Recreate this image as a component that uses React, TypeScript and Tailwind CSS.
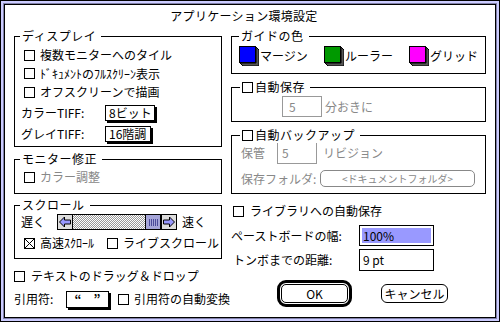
import type { ReactNode } from 'react';

function Check({ checked = false }: { checked?: boolean }) {
  return (
    <span className="w-[11px] h-[11px] shrink-0 border border-black bg-white flex">
      {checked && (
        <svg width="9" height="9" viewBox="0 0 9 9">
          <path d="M0 0L9 9M9 0L0 9" stroke="black" strokeWidth="1" />
        </svg>
      )}
    </span>
  );
}

function Group({
  label,
  labelLeft = 5,
  className = '',
  children,
}: {
  label: ReactNode;
  labelLeft?: number;
  className?: string;
  children?: ReactNode;
}) {
  return (
    <div className={`relative border border-black ${className}`}>
      <div
        className="absolute top-[-9px] h-[16px] bg-white px-[2px] pr-[5px] flex items-center gap-[2px] whitespace-nowrap tracking-[0.5px]"
        style={{ left: labelLeft }}
      >
        {label}
      </div>
      {children}
    </div>
  );
}

function Swatch({ color }: { color: string }) {
  return (
    <svg width="20" height="20" viewBox="0 0 20 20" className="shrink-0">
      <polygon points="17,1 20,4 20,20 4,20 1,17 17,17" fill="#555" stroke="black" strokeWidth="1" />
      <rect x="0.5" y="0.5" width="16" height="16" fill={color} stroke="black" strokeWidth="1" />
    </svg>
  );
}

function Arrow({ dir }: { dir: 'left' | 'right' }) {
  const pts =
    dir === 'left'
      ? '1.5,7 6.5,2 6.5,5 12.5,5 12.5,9 6.5,9 6.5,12'
      : '12.5,7 7.5,2 7.5,5 1.5,5 1.5,9 7.5,9 7.5,12';
  return (
    <div className="w-[16px] h-[16px] border border-black bg-[#dddddd] flex">
      <svg width="14" height="14" viewBox="0 0 14 14">
        <polygon points={pts} fill="#9999ff" stroke="black" strokeWidth="1" />
      </svg>
    </div>
  );
}

function ScrollBar() {
  return (
    <div className="flex w-[120px] h-[16px]">
      <Arrow dir="left" />
      <div className="flex-1 border-y border-black bg-[repeating-conic-gradient(#999_0_25%,#fff_0_50%)] bg-[length:2px_2px]" />
      <div className="w-[16px] h-[16px] border border-black bg-[#a5a5d8] flex">
        <svg width="14" height="14" viewBox="0 0 14 14">
          {[3, 5, 7, 9, 11].map((x) => (
            <line key={x} x1={x + 0.5} y1="4" x2={x + 0.5} y2="11" stroke="#4a4a99" strokeWidth="1" />
          ))}
        </svg>
      </div>
      <Arrow dir="right" />
    </div>
  );
}

function PopButton({ label, width }: { label: string; width: number }) {
  return (
    <div
      className="h-[16px] border border-black bg-white shadow-[2px_2px_0_#000] flex items-center pl-[3px]"
      style={{ width }}
    >
      {label}
    </div>
  );
}

export default function App() {
  return (
    <div className="w-[500px] h-[322px] border border-black bg-[#ccccff] p-[2px] font-['Noto_Sans_CJK_JP',sans-serif] text-[12px] leading-none text-black whitespace-nowrap">
      <div className="h-full border border-[#8080a8]">
        <div className="h-full border border-black bg-white flex flex-col">
          {/* Title */}
          <div className="h-[22px] flex items-center justify-center pr-[12px] tracking-[0.3px]">アプリケーション環境設定</div>

          <div className="flex mt-[9px] pl-[9px] gap-[9px]">
            {/* Left column */}
            <div className="w-[208px] shrink-0 flex flex-col">
              <Group label="ディスプレイ" className="h-[111px]">
                <div className="flex flex-col mt-[9px]">
                  <div className="h-[18px] flex items-center gap-[5px] pl-[9px]">
                    <Check />
                    <span>複数モニターへのタイル</span>
                  </div>
                  <div className="h-[19px] flex items-center gap-[5px] pl-[9px]">
                    <Check />
                    <span>ﾄﾞｷｭﾒﾝﾄのﾌﾙｽｸﾘｰﾝ表示</span>
                  </div>
                  <div className="h-[18px] flex items-center gap-[5px] pl-[9px]">
                    <Check />
                    <span>オフスクリーンで描画</span>
                  </div>
                  <div className="h-[20px] mt-[2px] flex items-center pl-[6px]">
                    <span className="w-[84px]">カラーTIFF:</span>
                    <PopButton label="8ビット" width={50} />
                  </div>
                  <div className="h-[20px] mt-[1px] flex items-center pl-[6px]">
                    <span className="w-[84px]">グレイTIFF:</span>
                    <PopButton label="16階調" width={46} />
                  </div>
                </div>
              </Group>

              <Group label="モニター修正" className="h-[35px] mt-[12px]">
                <div className="h-[16px] mt-[9px] flex items-center gap-[5px] pl-[9px]">
                  <Check />
                  <span className="text-[#888]">カラー調整</span>
                </div>
              </Group>

              <Group label="スクロール" className="h-[54px] mt-[11px]">
                <div className="h-[16px] mt-[8px] flex items-center pl-[6px]">
                  <span className="w-[36px]">遅く</span>
                  <ScrollBar />
                  <span className="ml-[5px]">速く</span>
                </div>
                <div className="h-[16px] mt-[5px] flex items-center pl-[9px]">
                  <div className="w-[83px] flex items-center gap-[5px]">
                    <Check checked />
                    <span>高速ｽｸﾛｰﾙ</span>
                  </div>
                  <div className="flex items-center gap-[5px]">
                    <Check />
                    <span>ライブスクロール</span>
                  </div>
                </div>
              </Group>

              <div className="h-[16px] mt-[9px] flex items-center gap-[6px]">
                <Check />
                <span>テキストのドラッグ＆ドロップ</span>
              </div>

              <div className="h-[20px] mt-[5px] flex items-center">
                <span className="w-[52px] shrink-0">引用符:</span>
                <div className="w-[43px] h-[17px] shrink-0 border border-black shadow-[2px_2px_0_#000] flex items-center justify-center gap-[12px] font-bold">
                  <span>“</span>
                  <span>”</span>
                </div>
                <div className="flex items-center gap-[5px] ml-[9px] shrink-0">
                  <Check />
                  <span>引用符の自動変換</span>
                </div>
              </div>
            </div>

            {/* Right column */}
            <div className="w-[255px] shrink-0 flex flex-col">
              <Group label="ガイドの色" labelLeft={7} className="h-[38px]">
                <div className="flex mt-[9px] pl-[7px]">
                  <div className="w-[85px] flex items-center gap-[1px]">
                    <Swatch color="#0000ff" />
                    <span>マージン</span>
                  </div>
                  <div className="w-[85px] flex items-center gap-[1px]">
                    <Swatch color="#009900" />
                    <span>ルーラー</span>
                  </div>
                  <div className="flex items-center gap-[1px]">
                    <Swatch color="#ff00ff" />
                    <span>グリッド</span>
                  </div>
                </div>
              </Group>

              <Group
                label={
                  <>
                    <Check />
                    <span>自動保存</span>
                  </>
                }
                labelLeft={8}
                className="h-[35px] mt-[13px]"
              >
                <div className="flex items-center mt-[8px] pl-[50px] text-[#888]">
                  <div className="w-[40px] h-[21px] border border-[#999] flex items-center pl-[6px]">5</div>
                  <span className="ml-[3px]">分おきに</span>
                </div>
              </Group>

              <Group
                label={
                  <>
                    <Check />
                    <span>自動バックアップ</span>
                  </>
                }
                labelLeft={8}
                className="h-[59px] mt-[13px]"
              >
                <div className="flex items-center mt-[6px] pl-[9px] text-[#888]">
                  <span className="w-[36px]">保管</span>
                  <div className="w-[40px] h-[22px] border border-[#999] flex items-center pl-[4px]">5</div>
                  <span className="ml-[6px]">リビジョン</span>
                </div>
                <div className="flex items-center mt-[6px] pl-[9px] text-[#888]">
                  <span className="w-[79px]">保存フォルダ:</span>
                  <div className="w-[155px] h-[17px] border border-[#888] rounded-[5px] flex items-center justify-center text-[10px]">
                    &lt;ドキュメントフォルダ&gt;
                  </div>
                </div>
              </Group>

              <div className="h-[16px] mt-[9px] flex items-center gap-[6px] pl-[2px]">
                <Check />
                <span>ライブラリへの自動保存</span>
              </div>

              <div className="flex items-center mt-[6px]">
                <span className="w-[128px]">ペーストボードの幅:</span>
                <div className="w-[75px] h-[21px] border border-black p-[2px]">
                  <div className="h-full bg-[#9999ff] flex items-center pl-[1px]">100%</div>
                </div>
              </div>

              <div className="flex items-center mt-[3px]">
                <span className="w-[128px] pl-[2px]">トンボまでの距離:</span>
                <div className="w-[75px] h-[22px] border border-black flex items-center pl-[3px]">9 pt</div>
              </div>

              <div className="flex items-center mt-[9px] pl-[46px]">
                <div className="w-[75px] h-[27px] border-[3px] border-black rounded-[9px] p-[1px]">
                  <div className="h-full border border-black rounded-[5px] flex items-center justify-center">OK</div>
                </div>
                <div className="ml-[29px] w-[67px] h-[19px] border border-black rounded-[6px] flex items-center justify-center">
                  キャンセル
                </div>
              </div>
            </div>
          </div>
        </div>
      </div>
    </div>
  );
}
